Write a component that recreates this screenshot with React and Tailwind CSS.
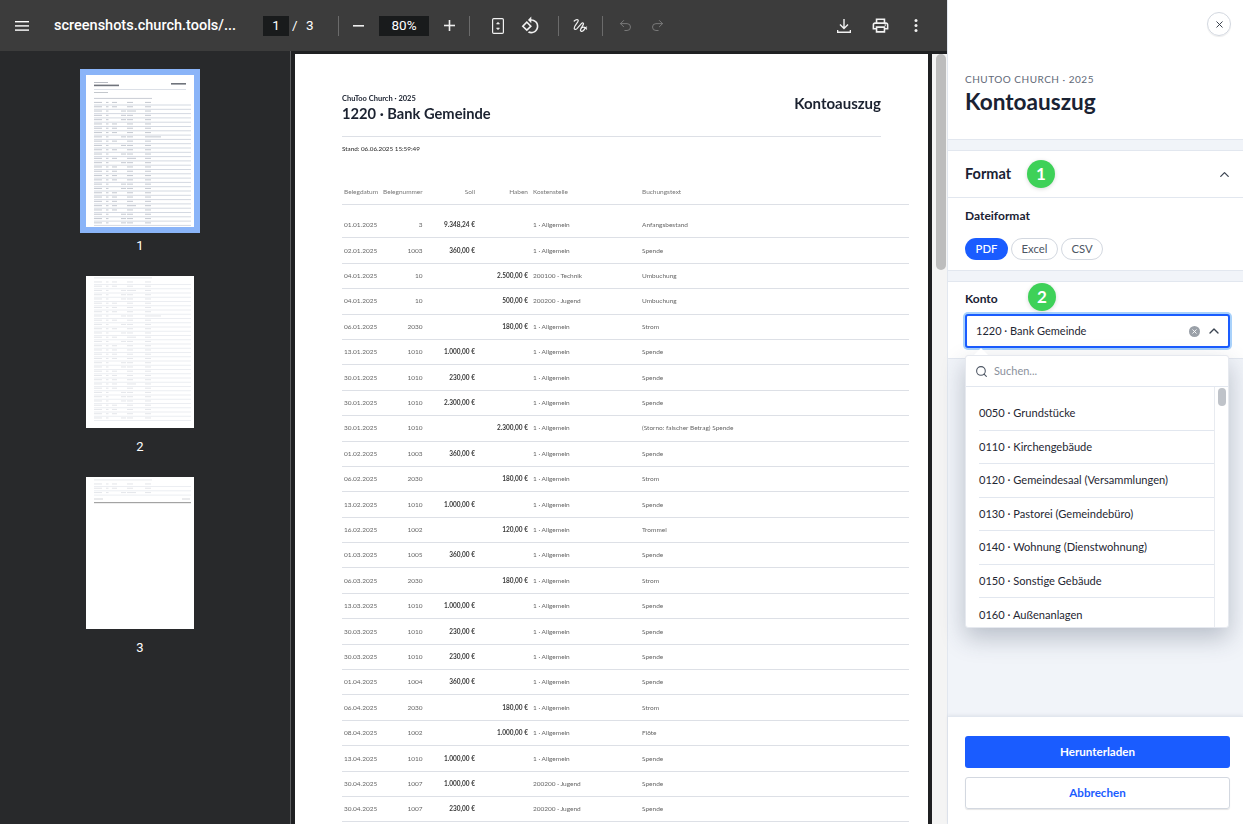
import React from "react";
import { Undo2, Redo2, ChevronUp, Search, X } from "lucide-react";

const A = "1 · Allgemein";
const J = "200200 · Jugend";
const rows = [
  ["01.01.2025", "3", "9.348,24 €", "", A, "Anfangsbestand"],
  ["02.01.2025", "1003", "360,00 €", "", A, "Spende"],
  ["04.01.2025", "10", "", "2.500,00 €", "200100 · Technik", "Umbuchung"],
  ["04.01.2025", "10", "", "500,00 €", J, "Umbuchung"],
  ["06.01.2025", "2030", "", "180,00 €", A, "Strom"],
  ["13.01.2025", "1010", "1.000,00 €", "", A, "Spende"],
  ["30.01.2025", "1010", "230,00 €", "", A, "Spende"],
  ["30.01.2025", "1010", "2.300,00 €", "", A, "Spende"],
  ["30.01.2025", "1010", "", "2.300,00 €", A, "(Storno: falscher Betrag) Spende"],
  ["01.02.2025", "1003", "360,00 €", "", A, "Spende"],
  ["06.02.2025", "2030", "", "180,00 €", A, "Strom"],
  ["13.02.2025", "1010", "1.000,00 €", "", A, "Spende"],
  ["16.02.2025", "1002", "", "120,00 €", A, "Trommel"],
  ["01.03.2025", "1005", "360,00 €", "", A, "Spende"],
  ["06.03.2025", "2030", "", "180,00 €", A, "Strom"],
  ["13.03.2025", "1010", "1.000,00 €", "", A, "Spende"],
  ["30.03.2025", "1010", "230,00 €", "", A, "Spende"],
  ["30.03.2025", "1010", "230,00 €", "", A, "Spende"],
  ["01.04.2025", "1004", "360,00 €", "", A, "Spende"],
  ["06.04.2025", "2030", "", "180,00 €", A, "Strom"],
  ["08.04.2025", "1002", "", "1.000,00 €", A, "Flöte"],
  ["13.04.2025", "1010", "1.000,00 €", "", A, "Spende"],
  ["30.04.2025", "1007", "1.000,00 €", "", J, "Spende"],
  ["30.04.2025", "1007", "230,00 €", "", J, "Spende"],
];

const accounts = [
  "0050 · Grundstücke",
  "0110 · Kirchengebäude",
  "0120 · Gemeindesaal (Versammlungen)",
  "0130 · Pastorei (Gemeindebüro)",
  "0140 · Wohnung (Dienstwohnung)",
  "0150 · Sonstige Gebäude",
  "0160 · Außenanlagen",
];

function Sep() {
  return <div className="w-px h-[20px] bg-[#6b6b6b] shrink-0" />;
}

function ThumbSvg({ count, start, pitch = 4.3, head, bar, line, footer }) {
  const items = [];
  for (let i = 0; i < count; i++) {
    const y = start + i * pitch;
    const haben = [2, 3, 4, 8, 10, 12, 14, 19, 20].includes(i % 24);
    items.push(
      <g key={i}>
        <rect x="8" y={y - 2.6} width="8" height="1.1" fill={bar} />
        <rect x="20" y={y - 2.6} width="2.5" height="1.1" fill={bar} />
        <rect x={haben ? 35 : 26} y={y - 2.6} width="5" height="1.1" fill={bar} />
        <rect x="41" y={y - 2.6} width={i % 11 === 2 ? 9 : 6} height="1.1" fill={bar} />
        <rect x="59" y={y - 2.6} width={i === 8 ? 16 : 6} height="1.1" fill={bar} />
        <rect x="8" y={y} width="97" height="1" fill={line} />
      </g>
    );
  }
  return (
    <div className="bg-white overflow-hidden w-[108px] h-[152px]">
      <svg width="108" height="152" viewBox="0 0 108 152" className="block blur-[0.4px]">
        {head}
        <rect x="8" y={start - 6.6} width="58" height="1" fill={bar} />
        {items}
        {footer}
      </svg>
    </div>
  );
}

function Thumb({ n, active, children, className }) {
  return (
    <div className={`flex flex-col items-center w-[120px] ${className}`}>
      <div className={active ? "p-[6px] bg-[#8ab4f8]" : "p-[6px]"}>{children}</div>
      <div className="mt-[5px] text-[13px] leading-[16px] text-white">{n}</div>
    </div>
  );
}

function Viewer() {
  const c = "grid grid-cols-[41px_39.5px_52.5px_53px_114px_1fr] items-center";
  return (
    <div className="flex flex-col w-[947px] shrink-0 h-full bg-[#28292b]">
      <div className="h-[51px] shrink-0 bg-[#3c3c3c] flex items-center text-white font-['Roboto',sans-serif] relative z-10">
        <svg width="14" height="10" viewBox="0 0 14 10" className="ml-[15px]" fill="#fff">
          <rect y="0" width="14" height="1.4" />
          <rect y="4.2" width="14" height="1.4" />
          <rect y="8.4" width="14" height="1.4" />
        </svg>
        <div className="ml-[25px] w-[183px] text-[14.5px] font-medium whitespace-nowrap">screenshots.church.tools/...</div>
        <div className="ml-[26px] w-[26px] h-[20px] bg-[#191b1c] flex items-center justify-center text-[13.5px]">1</div>
        <div className="ml-[3px] w-[3px] text-[13.5px]">/</div>
        <div className="ml-[11px] w-[8px] text-[13.5px]">3</div>
        <div className="ml-[24px]"><Sep /></div>
        <svg width="12" height="2" className="ml-[14px]"><rect width="11" height="1.6" fill="#eee" /></svg>
        <div className="ml-[14px] w-[50px] h-[20px] bg-[#191b1c] flex items-center justify-center text-[13.5px]">80%</div>
        <svg width="11" height="11" viewBox="0 0 11 11" className="ml-[15px]" fill="#eee"><rect y="4.7" width="11" height="1.6" /><rect x="4.7" width="1.6" height="11" /></svg>
        <div className="ml-[14px]"><Sep /></div>
        <svg width="12" height="16" viewBox="0 0 12 16" fill="none" className="ml-[22px]" stroke="#f1f1f1" strokeWidth="1.2">
          <rect x="0.6" y="0.6" width="10.8" height="14.8" rx="1.2" />
          <path d="M4.5 6 6 4.2 7.5 6z M4.5 10 6 11.8 7.5 10z" fill="#f1f1f1" strokeWidth="0.6" />
        </svg>
        <svg width="19" height="19" viewBox="0 0 24 24" fill="#f1f1f1" className="ml-[17px]">
          <path d="M7.34 6.41L.86 12.9l6.49 6.48 6.49-6.48-6.5-6.49zM3.69 12.9l3.66-3.66L11 12.9l-3.66 3.66-3.65-3.66zm15.67-6.26C17.61 4.88 15.3 4 13 4V.76L8.76 5 13 9.24V6c1.79 0 3.58.68 4.95 2.05 2.73 2.73 2.73 7.17 0 9.9C16.58 19.32 14.79 20 13 20c-.97 0-1.94-.21-2.84-.61l-1.49 1.49C10.02 21.62 11.51 22 13 22c2.3 0 4.61-.88 6.36-2.64 3.52-3.51 3.52-9.21 0-12.72z" />
        </svg>
        <div className="ml-[18px]"><Sep /></div>
        <svg width="15" height="15" viewBox="0 0 15 15" fill="none" stroke="#f1f1f1" strokeWidth="1.2" strokeLinecap="round" strokeLinejoin="round" className="ml-[14px]">
          <path d="M1.2 3C3 1.2 5.6 1 5.2 2.8 4.8 4.6 1.2 7.6 1.2 10.2c0 1.6 1.6 1.6 2.8.4l4.4-5c1.2-1.2 2.8-.6 1.8 1L7.6 11.4c-.8 1.6 1 2.6 2.6 1.4 1.6-1.2 1.6-3.4 3.4-3.8" />
          <path d="M8.4 9.8c1.6-.8 4-.6 5.2 1.2" />
        </svg>
        <div className="ml-[14px]"><Sep /></div>
        <Undo2 size={15} strokeWidth={1.5} color="#7d7d7d" className="ml-[15px]" />
        <Redo2 size={15} strokeWidth={1.5} color="#7d7d7d" className="ml-[17px]" />
        <svg width="14" height="14" viewBox="0 0 14 14" fill="none" stroke="#f1f1f1" strokeWidth="1.4" className="ml-[172px]">
          <path d="M7 0v9.4M3 5.6l4 4 4-4M0.6 11v2.2h12.8V11" />
        </svg>
        <svg width="19" height="19" viewBox="0 0 24 24" fill="#f1f1f1" className="ml-[20px]">
          <path d="M19 8h-1V3H6v5H5c-1.66 0-3 1.34-3 3v6h4v4h12v-4h4v-6c0-1.66-1.34-3-3-3zM8 5h8v3H8V5zm8 12v2H8v-4h8v2zm2-2v-2H6v2H4v-4c0-.55.45-1 1-1h14c.55 0 1 .45 1 1v4h-2z" />
          <circle cx="18" cy="11.5" r="1" />
        </svg>
        <svg width="4" height="13" viewBox="0 0 4 13" fill="#f1f1f1" className="ml-[24px]">
          <circle cx="2" cy="1.6" r="1.5" />
          <circle cx="2" cy="6.5" r="1.5" />
          <circle cx="2" cy="11.4" r="1.5" />
        </svg>
      </div>

      <div className="flex-1 flex min-h-0 overflow-hidden">
        <div className="w-[290px] shrink-0 bg-[#28292b] pl-[80px] pt-[18px] font-['Roboto',sans-serif]">
          <Thumb n="1" active className="">
            <ThumbSvg
              count={29}
              start={29.5}
              bar="#c9cdd4"
              line="#d4d9e2"
              head={
                <g>
                  <rect x="8" y="7" width="14" height="0.8" fill="#a8acb4" />
                  <rect x="8" y="9.6" width="25" height="1.6" fill="#70747c" />
                  <rect x="85" y="8" width="15" height="1.6" fill="#70747c" />
                  <rect x="8" y="14" width="92" height="0.8" fill="#d4d9e2" />
                  <rect x="8" y="17" width="14" height="0.8" fill="#b5b9c0" />
                </g>
              }
            />
          </Thumb>
          <Thumb n="2" className="mt-[16px]">
            <ThumbSvg count={33} start={8} pitch={4.25} bar="#e6e8ec" line="#eceef2" />
          </Thumb>
          <Thumb n="3" className="mt-[16px]">
            <ThumbSvg
              count={3}
              start={9}
              bar="#e6e8ec"
              line="#eceef2"
              footer={
                <g>
                  <rect x="8" y="21.4" width="9" height="1.2" fill="#dcdee2" />
                  <rect x="96" y="21.4" width="8" height="1.2" fill="#dcdee2" />
                  <rect x="8" y="25" width="97" height="1.2" fill="#a3a3a3" />
                </g>
              }
            />
          </Thumb>
        </div>
        <div className="w-px shrink-0 bg-[#5c5d5f]" />
        <div className="flex-1 flex bg-[#1f2022] pt-[3px] min-w-0">
          <div className="ml-[4px] w-[633px] shrink-0 bg-white font-['Lato',sans-serif] pl-[47px] pr-[19px] relative blur-[0.25px]">
            <div className="pt-[40px] w-[539px] flex justify-between border-b border-[#dde0e6] h-[83px]">
              <div>
                <div className="text-[7.5px] leading-[9px] font-bold text-[#1b2230]">ChuToo Church · 2025</div>
                <div className="text-[14.7px] leading-[20px] font-bold text-[#1b2230]">1220 · Bank Gemeinde</div>
              </div>
              <div className="text-[15px] leading-[18px] font-bold text-[#1b2230]">Kontoauszug</div>
            </div>
            <div className="mt-[8px] text-[6.3px] leading-[8px] text-[#333] font-medium">Stand: 06.06.2025 15:59:49</div>
            <div className={`${c} mt-[25px] h-[27px] pt-[2px] border-b border-[#dde0e6] text-[6.5px] text-[#777]`}>
              <div className="pl-[2px]">Belegdatum</div>
              <div className="text-right">Belegnummer</div>
              <div className="text-right">Soll</div>
              <div className="text-right">Haben</div>
              <div className="pl-[5px]">Kostenstelle</div>
              <div>Buchungstext</div>
            </div>
            <div className="pt-[8px]">
              {rows.map((r, i) => (
                <div key={i} className={`${c} h-[25.4px] border-b border-[#dde0e6] text-[6.5px] text-[#666]`}>
                  <div className="pl-[2px]">{r[0]}</div>
                  <div className="text-right">{r[1]}</div>
                  <div className="text-right font-bold text-[#3a3a3a]">{r[2]}</div>
                  <div className="text-right font-bold text-[#3a3a3a]">{r[3]}</div>
                  <div className="pl-[5px]">{r[4]}</div>
                  <div>{r[5]}</div>
                </div>
              ))}
            </div>
          </div>
          <div className="ml-[4px] w-[15px] shrink-0 bg-[#f4f4f4] pl-[4px] pr-[1px]">
            <div className="h-[216px] w-full rounded-full bg-[#bdbdbd]" />
          </div>
        </div>
      </div>
    </div>
  );
}

function Panel() {
  return (
    <div className="flex-1 h-full flex flex-col bg-[#f1f4f9] border-l border-[#e2e7ef] font-['Lato',sans-serif] relative">
      <div className="bg-white h-[140px] shrink-0 border-b border-[#e2e7ef] pl-[17px] pr-[13px]">
        <div className="flex justify-end pt-[12px]">
          <div className="w-[24px] h-[24px] -mr-[1px] rounded-full border border-[#d3d8e0] shadow-[0_1px_1px_rgba(0,0,0,0.08)] flex items-center justify-center">
            <X size={11} strokeWidth={2} color="#2b3340" />
          </div>
        </div>
        <div className="mt-[36px] text-[10px] leading-[14px] tracking-[0.05em] text-[#5f6977]">CHUTOO CHURCH · 2025</div>
        <div className="mt-[1px] text-[22.6px] leading-[30px] font-bold text-[#1a2233]">Kontoauszug</div>
      </div>

      <div className="mt-[10px] bg-white border-y border-[#e2e7ef] h-[121px] shrink-0">
        <div className="h-[47px] border-b border-[#e2e7ef] flex items-center justify-between pl-[17px] pr-[11px] relative">
          <div className="text-[14.5px] font-bold text-[#1a2233]">Format</div>
          <ChevronUp size={15} strokeWidth={2} color="#3a4350" />
          <div className="absolute left-[79px] top-[9px] w-[28px] h-[28px] rounded-full bg-[#3ed158] text-white font-bold text-[17px] flex items-center justify-center shadow-[0_1px_4px_rgba(0,0,0,0.15)]">1</div>
        </div>
        <div className="pl-[17px] pt-[10px]">
          <div className="text-[12px] leading-[15px] font-bold text-[#1a2233]">Dateiformat</div>
          <div className="mt-[15px] flex gap-[3px] text-[11.3px]">
            <div className="h-[22px] w-[43px] rounded-full bg-[#1a5cff] text-white font-medium flex items-center justify-center">PDF</div>
            <div className="h-[22px] w-[47px] rounded-full border border-[#d3d8e0] text-[#4c5563] flex items-center justify-center">Excel</div>
            <div className="h-[22px] w-[42px] rounded-full border border-[#d3d8e0] text-[#4c5563] flex items-center justify-center">CSV</div>
          </div>
        </div>
      </div>

      <div className="mt-[10px] bg-white border-y border-[#e2e7ef] h-[78px] shrink-0 relative pl-[17px] pr-[13px] pt-[9px]">
        <div className="text-[12px] leading-[15px] font-bold text-[#1a2233]">Konto</div>
        <div className="absolute left-[80px] top-[1px] w-[28px] h-[28px] rounded-full bg-[#3ed158] text-white font-bold text-[17px] flex items-center justify-center shadow-[0_1px_4px_rgba(0,0,0,0.15)]">2</div>
        <div className="mt-[8px] h-[34px] rounded-[3px] border-2 border-[#1a5cff] shadow-[0_0_0_2px_#a9d2fb] flex items-center pl-[9px] pr-[6px] text-[11px] text-[#1f2733] bg-white">
          <div className="flex-1">1220 · Bank Gemeinde</div>
          <div className="w-[11px] h-[11px] rounded-full bg-[#9aa0a8] flex items-center justify-center">
            <X size={7} strokeWidth={3} color="#fff" />
          </div>
          <ChevronUp size={16} strokeWidth={2} color="#3a4350" className="ml-[6px]" />
        </div>
      </div>

      <div className="absolute left-[17px] top-[355px] w-[264px] h-[273px] bg-white rounded-[3px] border border-[#e6e9ef] shadow-[0_10px_24px_rgba(40,55,80,0.28)] overflow-hidden z-10 flex flex-col">
        <div className="h-[31px] shrink-0 border-b border-[#e2e7ef] flex items-center pl-[9px] text-[11px] text-[#8a919c]">
          <Search size={13} strokeWidth={2} color="#4c5563" />
          <span className="ml-[6px]">Suchen...</span>
        </div>
        <div className="flex-1 flex min-h-0">
          <div className="flex-1 pl-[13px] pt-[10px] overflow-hidden min-w-0">
            {accounts.map((a, i) => (
              <div key={a} className={`h-[33.55px] shrink-0 flex items-center text-[11.1px] text-[#1f2733] ${i < 6 ? "border-b border-[#e2e7ef]" : ""}`}>{a}</div>
            ))}
          </div>
          <div className="w-[14px] shrink-0 border-l border-[#e8ebf0] pl-[3px] pr-[2px] pt-[1px]">
            <div className="h-[18px] rounded-full bg-[#bfc3c9]" />
          </div>
        </div>
      </div>
      <svg width="14" height="7" viewBox="0 0 14 7" className="absolute left-[26px] top-[348px] z-20"><path d="M0 7 7 0l7 7z" fill="#fff" /></svg>

      <div className="mt-auto h-[108px] shrink-0 bg-white border-t border-[#e2e7ef] pl-[17px] pr-[13px] pt-[19px] shadow-[0_-1px_3px_rgba(40,55,80,0.08)]">
        <div className="h-[32px] rounded-[3px] bg-[#1a5cff] text-white text-[11.6px] font-bold flex items-center justify-center">Herunterladen</div>
        <div className="mt-[9px] h-[32px] rounded-[3px] border border-[#d3d8e0] shadow-[0_1px_1px_rgba(0,0,0,0.1)] text-[#1a5cff] text-[11.6px] font-bold flex items-center justify-center">Abbrechen</div>
      </div>
    </div>
  );
}

export default function App() {
  return (
    <div className="flex w-[1243px] h-[824px] overflow-hidden">
      <Viewer />
      <Panel />
    </div>
  );
}
